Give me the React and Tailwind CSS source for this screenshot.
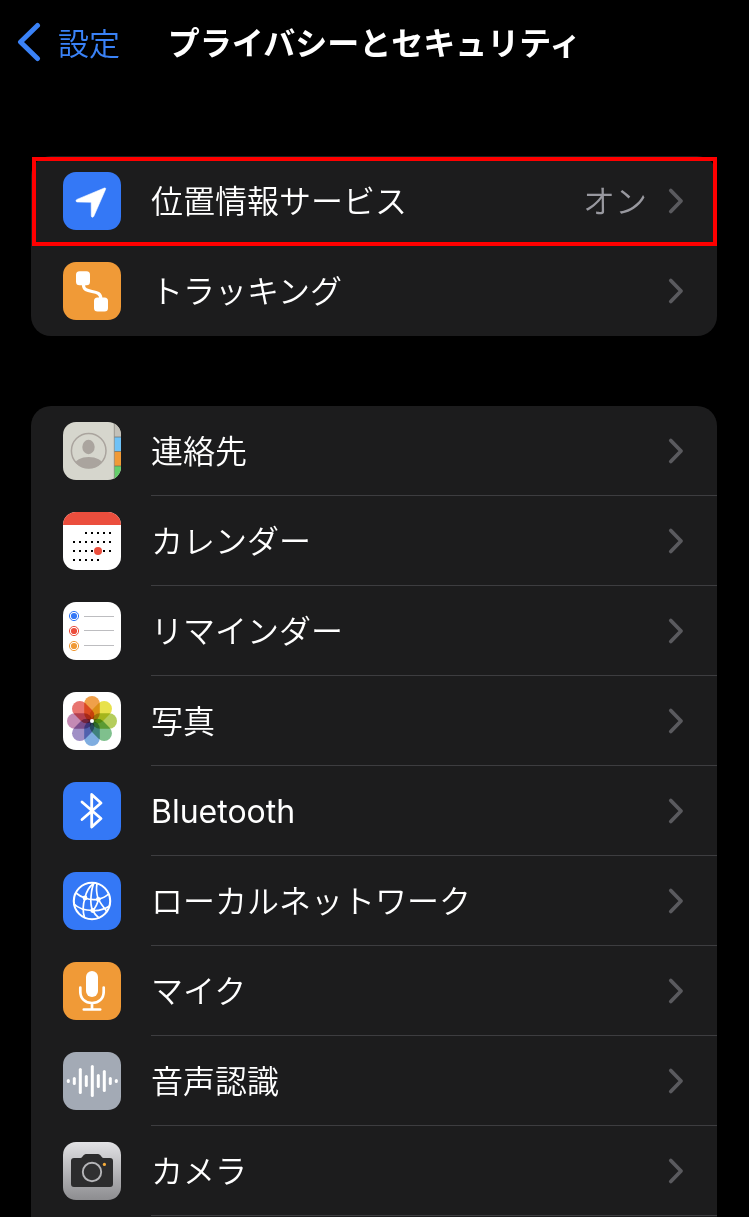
import clsx from "clsx";

const LocationIcon = () => (
  <path
    d="M41.4 16 L14 27.4 C12.4 28.1 12.7 30 14.4 30 L27.6 30.2 C28 30.2 28.2 30.4 28.2 30.8 L28.3 43.8 C28.3 45.5 30.1 45.8 30.8 44.3 L42.6 17.3 C43 16.3 42.3 15.6 41.4 16 Z"
    fill="#fff"
    stroke="#fff"
    strokeWidth="0.6"
  />
);

const TrackingIcon = () => (
  <>
    <path
      d="M20.5 22 C19.5 34 38.5 25 37.8 37"
      fill="none"
      stroke="#fff"
      strokeWidth="3.2"
    />
    <rect x="13" y="9.3" width="14" height="14" rx="3.5" fill="#fff" />
    <rect x="31" y="35.5" width="14" height="14" rx="3.5" fill="#fff" />
  </>
);

const ContactsIcon = () => (
  <>
    <defs>
      <clipPath id="contact-face">
        <circle cx="25.7" cy="28.8" r="17.5" />
      </clipPath>
    </defs>
    <rect x="51" width="7" height="15" fill="#c3c1b9" />
    <rect x="51" y="15" width="7" height="14.5" fill="#6fc2f7" />
    <rect x="51" y="29.5" width="7" height="14.5" fill="#f09a37" />
    <rect x="51" y="44" width="7" height="14" fill="#65cf6b" />
    <path
      d="M51 15 H58 M51 29.5 H58 M51 44 H58"
      stroke="#5f5e58"
      strokeOpacity="0.6"
    />
    <path d="M51.3 0 V58" stroke="#8f8e86" strokeWidth="0.8" />
    <g fill="#aaa49e">
      <ellipse cx="25.5" cy="25" rx="6.2" ry="7.2" />
      <ellipse
        cx="25.7"
        cy="43"
        rx="14"
        ry="8"
        clipPath="url(#contact-face)"
      />
    </g>
    <circle
      cx="25.7"
      cy="28.8"
      r="17.3"
      fill="none"
      stroke="#aaa49e"
      strokeWidth="1.5"
    />
  </>
);

const calendarRows = [
  { y: 21, xs: [23, 29, 35, 41, 47] },
  { y: 30, xs: [11, 17, 23, 29, 35, 41, 47] },
  { y: 39, xs: [11, 17, 23, 29, 35, 41, 47] },
  { y: 48, xs: [11, 17, 23, 29, 35] },
];

const CalendarIcon = () => (
  <>
    <rect width="58" height="13" fill="#eb4e3d" />
    {calendarRows.map(({ y, xs }) =>
      xs.map((x) => (
        <rect key={`${x}-${y}`} x={x - 1} y={y - 1} width="2" height="2" />
      ))
    )}
    <circle cx="35" cy="39" r="4" fill="#eb4e3d" />
  </>
);

const RemindersIcon = () => (
  <>
    {[
      { y: 14, color: "#3478f6" },
      { y: 29, color: "#eb4e3d" },
      { y: 44, color: "#f09a37" },
    ].map(({ y, color }) => (
      <g key={y}>
        <circle cx="11" cy={y} r="4.6" fill="none" stroke={color} />
        <circle cx="11" cy={y} r="3.1" fill={color} />
        <path d={`M21 ${y === 14 ? 14.5 : y - 0.5} H51`} stroke="#bdbdc0" />
      </g>
    ))}
  </>
);

const petals = [
  "#f0a04a",
  "#e8e24c",
  "#b4cd5c",
  "#7fc08d",
  "#7fade0",
  "#a08fc6",
  "#c48ab4",
  "#e87470",
];

const PhotosIcon = () => (
  <g style={{ isolation: "isolate" }}>
    {petals.map((color, i) => (
      <rect
        key={color}
        x="21.2"
        y="4"
        width="15.6"
        height="25"
        rx="7.8"
        fill={color}
        transform={`rotate(${i * 45} 29 29)`}
        style={{ mixBlendMode: "multiply" }}
      />
    ))}
    <circle cx="29" cy="29" r="2" fill="#fff" />
  </g>
);

const BluetoothIcon = () => (
  <path
    d="M19 20 L38 36.5 L28.7 45 V12.5 L38 21 L19 37.5"
    fill="none"
    stroke="#fff"
    strokeWidth="2.8"
    strokeLinecap="round"
    strokeLinejoin="round"
  />
);

const NetworkIcon = () => (
  <>
    <g fill="none" stroke="#fff" strokeWidth="1.7">
      <circle cx="29" cy="29" r="18.2" strokeWidth="2.1" />
      <path d="M31 11 C26 15 23 20 22 26 C20 32 19.5 39 21.5 45.5" />
      <path d="M34 11.5 C33 17 33.5 22 35.3 27.3 C38 32 40 34.5 43.5 39" />
      <path d="M31 11 C28.5 16 28.5 20 28 25 C27.5 31 27.5 34 29.7 38.5 C31 41 33 43.5 35.5 45.5" />
      <path d="M13 21 C16 23.5 19 25.3 22 26 C27 28 31 28 35.3 27.3 C40 26 43 24.5 45.5 22" />
      <path d="M11 32 C16 37 22 38.5 29.7 38.5 C36 39 41 37.5 46.5 34" />
      <path d="M35.3 27.3 C34.5 32 32.5 35.5 29.7 38.5" />
    </g>
    <g fill="#fff">
      <circle cx="22" cy="26" r="2.4" />
      <circle cx="35.3" cy="27.3" r="2.4" />
      <circle cx="29.7" cy="38.5" r="2.4" />
    </g>
  </>
);

const MicIcon = () => (
  <>
    <rect x="23" y="9" width="12" height="26" rx="6" fill="#fff" />
    <path
      d="M17.3 25.5 V29.5 C17.3 36.5 22 41 29 41 C36 41 40.7 36.5 40.7 29.5 V25.5 M29 41 V47.5 M20.8 47.5 H37.2"
      fill="none"
      stroke="#fff"
      strokeWidth="2.7"
      strokeLinecap="round"
    />
  </>
);

const SpeechIcon = () => (
  <>
    {[4, 8, 26, 12, 32, 14, 22, 8, 4].map((h, i) => (
      <rect
        key={i}
        x={3.8 + i * 6}
        y={29 - h / 2}
        width="3"
        height={h}
        rx="1.5"
        fill="#fff"
      />
    ))}
  </>
);

const CameraIcon = () => (
  <>
    <path
      d="M11 16 H17.5 C19.5 16 20.2 12 23 12 H35 C37.8 12 38.5 16 40.5 16 H47 Q50 16 50 19 V42 Q50 45 47 45 H11 Q8 45 8 42 V19 Q8 16 11 16 Z"
      fill="#2c2c2d"
    />
    <circle
      cx="29"
      cy="30"
      r="9.2"
      fill="#303031"
      stroke="#b5b5b8"
      strokeWidth="1.9"
    />
    <circle cx="41.4" cy="22.4" r="1.6" fill="#f5ab3a" />
  </>
);

const AppIcon = ({ className, children }) => (
  <span
    className={clsx(
      "block size-[58px] shrink-0 overflow-hidden rounded-[13px]",
      className
    )}
  >
    <svg viewBox="0 0 58 58" className="size-full" aria-hidden="true">
      {children}
    </svg>
  </span>
);

const locationItems = [
  {
    title: "位置情報サービス",
    value: "オン",
    bg: "bg-[#3478f6]",
    Icon: LocationIcon,
    highlighted: true,
  },
  { title: "トラッキング", bg: "bg-[#f09a37]", Icon: TrackingIcon },
];

const appItems = [
  { title: "連絡先", bg: "bg-[#d6d6cd]", Icon: ContactsIcon },
  { title: "カレンダー", bg: "bg-white", Icon: CalendarIcon },
  { title: "リマインダー", bg: "bg-white", Icon: RemindersIcon },
  { title: "写真", bg: "bg-white", Icon: PhotosIcon },
  { title: "Bluetooth", bg: "bg-[#3478f6]", Icon: BluetoothIcon, latin: true },
  { title: "ローカルネットワーク", bg: "bg-[#3478f6]", Icon: NetworkIcon },
  { title: "マイク", bg: "bg-[#f09a37]", Icon: MicIcon },
  { title: "音声認識", bg: "bg-[#a3aab5]", Icon: SpeechIcon },
  {
    title: "カメラ",
    bg: "bg-linear-to-b from-[#e2e2e5] to-[#8d8d90]",
    Icon: CameraIcon,
  },
];

const Row = ({ title, value, bg, Icon, latin, highlighted, divider }) => (
  <li className="relative">
    <button
      type="button"
      className="flex h-[90px] w-full items-center gap-[30px] pl-8 text-left"
    >
      <AppIcon className={bg}>
        <Icon />
      </AppIcon>
      <span
        className={clsx(
          "flex h-full min-w-0 flex-1 items-center border-b pr-8",
          divider ? "border-[#3d3d40]" : "border-transparent"
        )}
      >
        <span
          className={clsx(
            "flex-1 truncate pt-[3px] text-white",
            latin && "font-normal"
          )}
        >
          {title}
        </span>
        {value && (
          <span className="mr-5 pt-[3px] text-[#98989f]">{value}</span>
        )}
        <svg
          viewBox="0 0 18 28"
          className="h-7 w-[18px] shrink-0"
          fill="none"
          stroke="#5a5a5e"
          strokeWidth="3.8"
          strokeLinecap="round"
          strokeLinejoin="round"
          aria-hidden="true"
        >
          <path d="M3.8 3.5 L14 14 L3.8 24.5" />
        </svg>
      </span>
    </button>
    {highlighted && (
      <span className="pointer-events-none absolute inset-0 top-px left-px border-4 border-[#ff0000]" />
    )}
  </li>
);

const App = () => {
  return (
    <div className="flex min-h-screen flex-col bg-black font-['Inter','Noto_Sans_CJK_JP',sans-serif] text-[32px] leading-10 font-[350]">
      {/* header */}
      <header className="grid h-[84px] grid-cols-[1fr_auto_1fr] items-center px-4">
        <a href="#settings" className="flex items-center gap-4 text-[#3a82f7]">
          <svg
            viewBox="0 0 26 40"
            className="h-10 w-[26px]"
            fill="none"
            stroke="currentColor"
            strokeWidth="5"
            strokeLinecap="round"
            strokeLinejoin="round"
            aria-hidden="true"
          >
            <path d="M21.5 3.5 L4.5 20 L21.5 36.5" />
          </svg>
          <span className="pt-[3px] text-[31px]">設定</span>
        </a>
        <h1 className="pt-[3px] font-bold text-white">
          プライバシーとセキュリティ
        </h1>
      </header>
      {/* header */}

      <main className="mt-[72px] flex flex-1 flex-col gap-[70px] pr-8 pl-[31px]">
        <ul className="rounded-[20px] bg-[#1c1c1d]">
          {locationItems.map((item) => (
            <Row key={item.title} {...item} />
          ))}
        </ul>

        <ul className="flex-1 rounded-t-[20px] bg-[#1c1c1d]">
          {appItems.map((item) => (
            <Row key={item.title} {...item} divider />
          ))}
        </ul>
      </main>
    </div>
  );
};

export default App;
